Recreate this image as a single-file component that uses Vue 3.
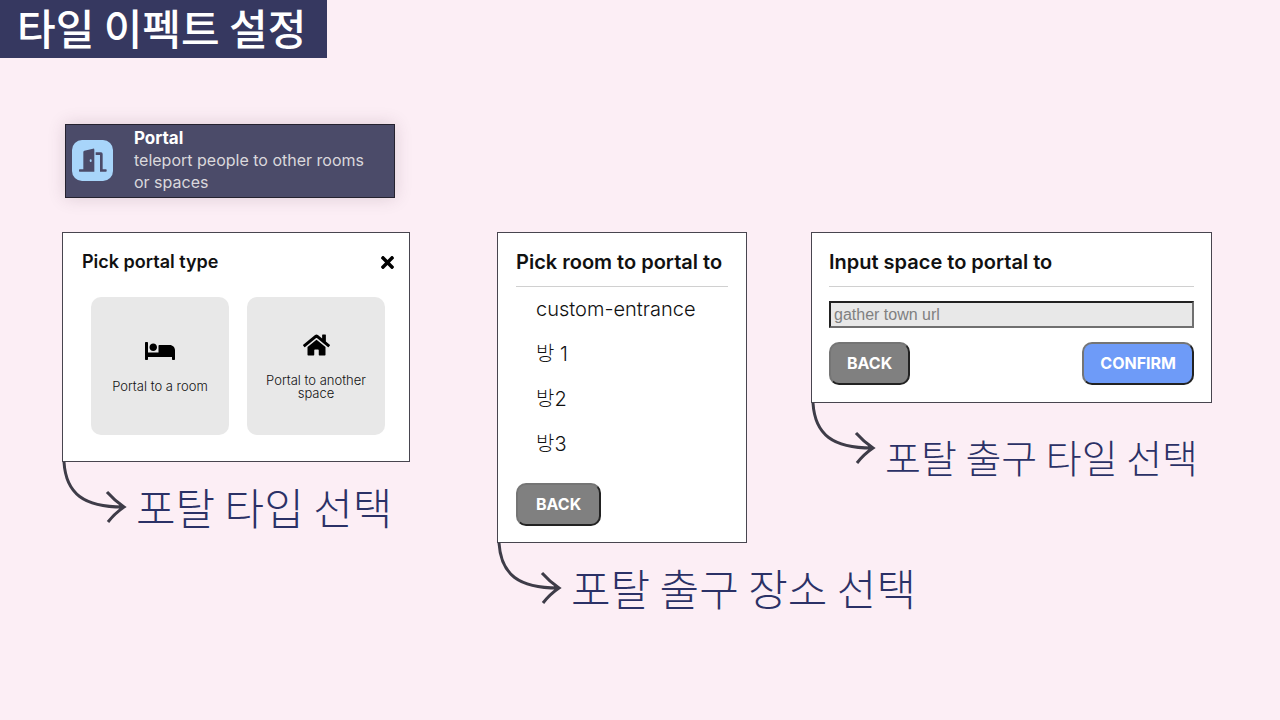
<script setup>
import { ref } from 'vue'

const rooms = ['custom-entrance', '방 1', '방2', '방3']
const url = ref('')
</script>

<template>
  <main class="slide">
    <h1 class="title">타일 이펙트 설정</h1>

    <div class="board">
      <section class="effect">
        <svg class="effect-icon" viewBox="0 0 123 123" aria-hidden="true">
          <rect width="123" height="123" rx="30" fill="#a8d5fa" />
          <path fill="#4b4b69" d="M34 36q0-3 3-4l26-6q4-1 4 3v66H23q-2 0-2-2v-3q0-2 2-2h11z" />
          <path fill="#4b4b69" d="M71 37h16q5 0 5 5v46h10q2 0 2 2v3q0 2-2 2H84V45H71z" />
          <ellipse cx="56" cy="62" rx="3" ry="4" fill="#a8d5fa" />
        </svg>
        <div class="effect-text">
          <strong>Portal</strong>
          <p>teleport people to other rooms or spaces</p>
        </div>
      </section>

      <section class="step step-type">
        <div class="panel">
          <header class="panel-head">
            <h2>Pick portal type</h2>
            <button class="close" type="button" aria-label="Close">
              <svg viewBox="0 0 352 352" aria-hidden="true">
                <path transform="translate(0 -80)" d="M242.72 256l100.07-100.07c12.28-12.28 12.28-32.19 0-44.48l-22.24-22.24c-12.28-12.28-32.19-12.28-44.48 0L176 189.28 75.93 89.21c-12.28-12.28-32.19-12.28-44.48 0L9.21 111.45c-12.28 12.28-12.28 32.19 0 44.48L109.28 256 9.21 356.07c-12.28 12.28-12.28 32.19 0 44.48l22.24 22.24c12.28 12.28 32.2 12.28 44.48 0L176 322.72l100.07 100.07c12.28 12.28 32.2 12.28 44.48 0l22.24-22.24c12.28-12.28 12.28-32.19 0-44.48L242.72 256z" />
              </svg>
            </button>
          </header>
          <div class="tiles">
            <button class="tile" type="button">
              <svg viewBox="0 0 640 512" aria-hidden="true">
                <path d="M176 256c44.11 0 80-35.89 80-80s-35.89-80-80-80-80 35.89-80 80 35.89 80 80 80zm352-128H304c-8.84 0-16 7.16-16 16v144H64V80c0-8.84-7.16-16-16-16H16C7.16 64 0 71.16 0 80v352c0 8.84 7.16 16 16 16h32c8.84 0 16-7.16 16-16v-48h512v48c0 8.84 7.16 16 16 16h32c8.84 0 16-7.16 16-16V240c0-61.86-50.14-112-112-112z" />
              </svg>
              <span>Portal to a room</span>
            </button>
            <button class="tile" type="button">
              <svg viewBox="0 0 576 512" aria-hidden="true">
                <path d="M280.37 148.26L96 300.11V464a16 16 0 0 0 16 16l112.06-.29a16 16 0 0 0 15.92-16V368a16 16 0 0 1 16-16h64a16 16 0 0 1 16 16v95.64a16 16 0 0 0 16 16.05L464 480a16 16 0 0 0 16-16V300L295.67 148.26a12.19 12.19 0 0 0-15.3 0zM571.6 251.47L488 182.56V44.05a12 12 0 0 0-12-12h-56a12 12 0 0 0-12 12v72.61L318.47 43a48 48 0 0 0-61 0L4.34 251.47a12 12 0 0 0-1.6 16.9l25.5 31A12 12 0 0 0 45.15 301l235.22-193.74a12.19 12.19 0 0 1 15.3 0L530.9 301a12 12 0 0 0 16.9-1.6l25.5-31a12 12 0 0 0-1.7-16.93z" />
              </svg>
              <span>Portal to another space</span>
            </button>
          </div>
        </div>
        <div class="caption">
          <svg class="arrow" viewBox="0 0 66 62" aria-hidden="true">
            <path d="M2 0C4 32 22 45 61 45M45 30Q52 38 62 45Q53 51 46 60" />
          </svg>
          <p>포탈 타입 선택</p>
        </div>
      </section>

      <section class="step step-room">
        <div class="panel">
          <h2 class="ruled">Pick room to portal to</h2>
          <ul class="rooms">
            <li v-for="room in rooms" :key="room">
              <button type="button">{{ room }}</button>
            </li>
          </ul>
          <div class="actions">
            <button class="action" type="button">BACK</button>
          </div>
        </div>
        <div class="caption">
          <svg class="arrow" viewBox="0 0 66 62" aria-hidden="true">
            <path d="M2 0C4 32 22 45 61 45M45 30Q52 38 62 45Q53 51 46 60" />
          </svg>
          <p>포탈 출구 장소 선택</p>
        </div>
      </section>

      <section class="step step-space">
        <div class="panel">
          <h2 class="ruled">Input space to portal to</h2>
          <input v-model="url" type="text" placeholder="gather town url" aria-label="gather town url" />
          <div class="actions">
            <button class="action" type="button">BACK</button>
            <button class="action confirm" type="button">CONFIRM</button>
          </div>
        </div>
        <div class="caption small">
          <svg class="arrow" viewBox="0 0 66 62" aria-hidden="true">
            <path d="M2 0C4 32 22 45 61 45M45 30Q52 38 62 45Q53 51 46 60" />
          </svg>
          <p>포탈 출구 타일 선택</p>
        </div>
      </section>
    </div>
  </main>
</template>

<style>
body {
  background: #fceef5;
}
</style>

<style scoped>
.slide {
  min-height: 100vh;
  background: #fceef5;
  color: #111;
  font-family: Inter, "Noto Sans CJK KR", sans-serif;
}

.slide * {
  box-sizing: border-box;
}

h1,
h2,
p,
ul {
  margin: 0;
  padding: 0;
}

button {
  font-family: inherit;
  color: inherit;
  cursor: pointer;
}

.title {
  width: fit-content;
  padding: 0 21px 4px 17px;
  background: #363860;
  color: #fff;
  font-family: "Noto Sans CJK KR", sans-serif;
  font-size: 42px;
  font-weight: 500;
  line-height: 54px;
}

.board {
  display: grid;
  grid-template-columns: minmax(0, 435fr) minmax(0, 314fr) minmax(0, 401fr);
  align-items: start;
  row-gap: 34px;
  padding: 66px 68px 0 62px;
}

.effect {
  grid-column: 1;
  display: flex;
  align-items: center;
  gap: 21px;
  margin: 0 102px 0 3px;
  padding: 2px 18px 4px 6px;
  border: 1px solid #25222f;
  background: #4b4b69;
  box-shadow: 0 0 16px rgba(75, 50, 70, 0.18);
}

.effect-icon {
  flex: none;
  width: 41px;
  height: 41px;
}

.effect-text {
  color: #dad8dc;
  font-size: 16px;
  line-height: 22px;
}

.effect-text strong {
  display: block;
  color: #fff;
  font-size: 17px;
  font-weight: 700;
}

.step {
  grid-row: 2;
}

.step-type {
  margin-right: 87px;
}

.step-room {
  margin-right: 64px;
}

.panel {
  border: 1px solid #48454f;
  background: #fff;
}

.step-type .panel {
  padding: 19px 15px 26px 19px;
}

.step-room .panel {
  padding: 16px 18px;
}

.step-space .panel {
  padding: 16px 17px 17px;
}

h2 {
  font-size: 18px;
  font-weight: 600;
  line-height: 20px;
  white-space: nowrap;
}

.panel-head {
  display: flex;
  justify-content: space-between;
  align-items: center;
}

.close {
  display: flex;
  padding: 0;
  border: 0;
  background: none;
}

.close svg {
  width: 13px;
  height: 13px;
}

.tiles {
  display: grid;
  grid-template-columns: 1fr 1fr;
  gap: 18px;
  margin: 25px 9px 0;
}

.tile {
  display: flex;
  flex-direction: column;
  align-items: center;
  justify-content: center;
  gap: 17px;
  aspect-ratio: 1;
  padding: 0 12px;
  border: 0;
  border-radius: 10px;
  background: #e8e8e8;
  font-size: 13px;
  font-weight: 300;
  line-height: 13px;
}

.tile svg {
  height: 24px;
}

.ruled {
  padding-bottom: 11px;
  border-bottom: 1px solid #d0d0d0;
  font-size: 20px;
  line-height: 26px;
}

.rooms {
  list-style: none;
}

.rooms button {
  display: block;
  width: 100%;
  padding: 0 20px;
  border: 0;
  background: none;
  font-size: 20px;
  font-weight: 300;
  line-height: 45px;
  text-align: left;
}

.actions {
  display: flex;
  justify-content: space-between;
}

.step-room .actions {
  margin-top: 16px;
}

.action {
  padding: 0 16px;
  border: 2px solid;
  border-color: #757575 #222 #222 #757575;
  border-radius: 10px;
  background: #808080;
  color: #fff;
  font-size: 16px;
  font-weight: 700;
  line-height: 39px;
}

.step-room .action {
  padding: 0 18px;
}

.confirm {
  background: #6e9bf8;
}

input {
  display: block;
  width: 100%;
  height: 27px;
  margin: 14px 0;
  padding: 0 3px;
  border: 2px solid;
  border-color: #222 #707070 #707070 #222;
  border-radius: 0;
  background: #e8e8e8;
  font-family: "Liberation Sans", sans-serif;
  font-size: 16px;
}

input::placeholder {
  color: #808080;
}

.caption {
  display: flex;
  align-items: flex-start;
  gap: 8px;
  color: #2b3166;
  font-family: "Noto Sans CJK KR", sans-serif;
  font-size: 43px;
  font-weight: 300;
  line-height: 88px;
  white-space: nowrap;
}

.small {
  font-size: 39px;
  line-height: 106px;
}

.arrow {
  flex: none;
  width: 66px;
  height: 62px;
  fill: none;
  stroke: #3e3c48;
  stroke-width: 3;
}
</style>
